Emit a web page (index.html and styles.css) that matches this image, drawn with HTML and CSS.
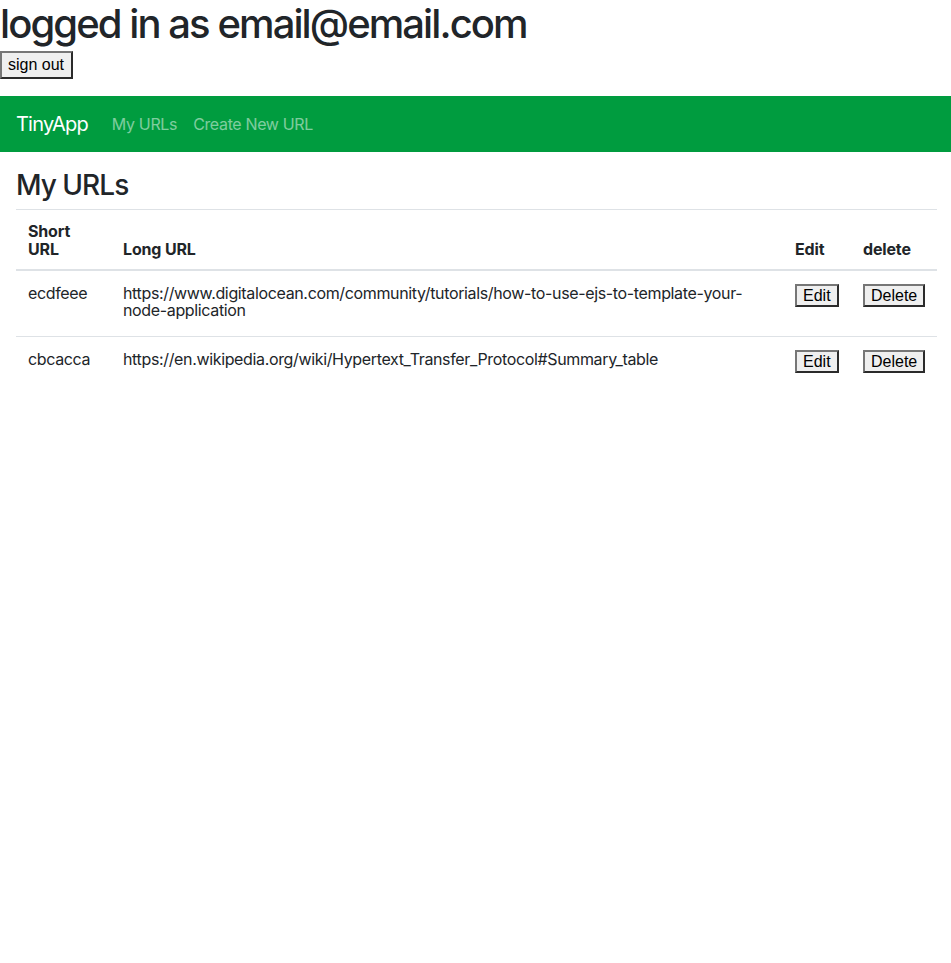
FILE: index.html
```html
<!DOCTYPE html>
<html>
<head>
<meta charset="utf-8">
<title>TinyApp</title>
<link rel="stylesheet" href="styles.css">
</head>
<body>
<header class="session">
  <h1 class="session-title">logged in as email@email.com</h1>
  <form class="signout-form">
    <button type="button" class="btn-native btn-signout">sign out</button>
  </form>
</header>
<nav class="navbar">
  <a class="navbar-brand" href="#">TinyApp</a>
  <a class="nav-link" href="#">My URLs</a>
  <a class="nav-link" href="#">Create New URL</a>
</nav>
<main class="container">
  <h3 class="page-title">My URLs</h3>
  <table class="url-table">
    <colgroup>
      <col class="col-short">
      <col class="col-long">
      <col class="col-edit">
      <col class="col-delete">
    </colgroup>
    <thead>
      <tr>
        <th>Short URL</th>
        <th>Long URL</th>
        <th>Edit</th>
        <th>delete</th>
      </tr>
    </thead>
    <tbody>
      <tr>
        <td>ecdfeee</td>
        <td>https://www.digitalocean.com/community/tutorials/how-to-use-ejs-to-template-your-node-application</td>
        <td class="action-cell"><form class="row-form"><button type="button" class="btn-native btn-row">Edit</button></form></td>
        <td class="action-cell"><form class="row-form"><button type="button" class="btn-native btn-row">Delete</button></form></td>
      </tr>
      <tr>
        <td>cbcacca</td>
        <td>https://en.wikipedia.org/wiki/Hypertext_Transfer_Protocol#Summary_table</td>
        <td class="action-cell"><form class="row-form"><button type="button" class="btn-native btn-row">Edit</button></form></td>
        <td class="action-cell"><form class="row-form"><button type="button" class="btn-native btn-row">Delete</button></form></td>
      </tr>
    </tbody>
  </table>
</main>
</body>
</html>
```

FILE: styles.css
```css
* { box-sizing: border-box; }

html, body {
  margin: 0;
  padding: 0;
  background: #fff;
}

body {
  font-family: Inter, "Noto Sans", "Liberation Sans", sans-serif;
  font-size: 16px;
  line-height: 1.5;
  color: #212529;
  letter-spacing: -0.022em;
}

.session-title {
  margin: 0;
  font-size: 40px;
  font-weight: 500;
  line-height: 48px;
  letter-spacing: -0.048em;
}

.signout-form {
  margin: 0 0 17px;
  padding-top: 3px;
}

.btn-native {
  display: block;
  font-family: "Liberation Sans", Arial, sans-serif;
  font-size: 16px;
  line-height: 18px;
  letter-spacing: normal;
  color: #000;
  background: #efefef;
  border: 2px solid;
  border-color: #767676 #2b2b2b #2b2b2b #767676;
  border-radius: 0;
  cursor: pointer;
}

.btn-signout {
  height: 28px;
  padding: 3px 7px 3px 6px;
}

.btn-row {
  height: 23px;
  padding: 1px 6px 0;
}

.navbar {
  display: flex;
  align-items: center;
  height: 56px;
  padding: 8px 16px;
  background: #009c3f;
}

.navbar-brand {
  margin-right: 16px;
  padding: 5px 0;
  font-size: 20px;
  line-height: 30px;
  letter-spacing: -0.04em;
  color: #fff;
  text-decoration: none;
}

.nav-link {
  padding: 8px;
  font-size: 16px;
  line-height: 24px;
  color: rgba(255, 255, 255, 0.5);
  text-decoration: none;
}

.container {
  margin: 17px 14px 0 16px;
}

.page-title {
  margin: 0 0 6px;
  font-size: 28px;
  font-weight: 500;
  line-height: 33.6px;
  letter-spacing: -0.035em;
}

.url-table {
  width: 100%;
  border-collapse: collapse;
  table-layout: fixed;
}

.col-short { width: 95px; }
.col-edit { width: 68px; }
.col-delete { width: 86px; }

.url-table th,
.url-table td {
  text-align: left;
  border-top: 1px solid #dee2e6;
}

.url-table th {
  padding: 12px 12px 11px;
  line-height: 18px;
  font-weight: 700;
  letter-spacing: -0.01em;
  vertical-align: bottom;
  border-bottom: 2px solid #dee2e6;
}

.url-table td {
  padding: 14px 12px 12px;
  line-height: 17.5px;
  vertical-align: top;
}

.url-table td.action-cell {
  padding-top: 13px;
}

.url-table tbody tr:first-child td {
  border-top: 0;
}

.row-form {
  margin: 0 0 17px;
}
```
